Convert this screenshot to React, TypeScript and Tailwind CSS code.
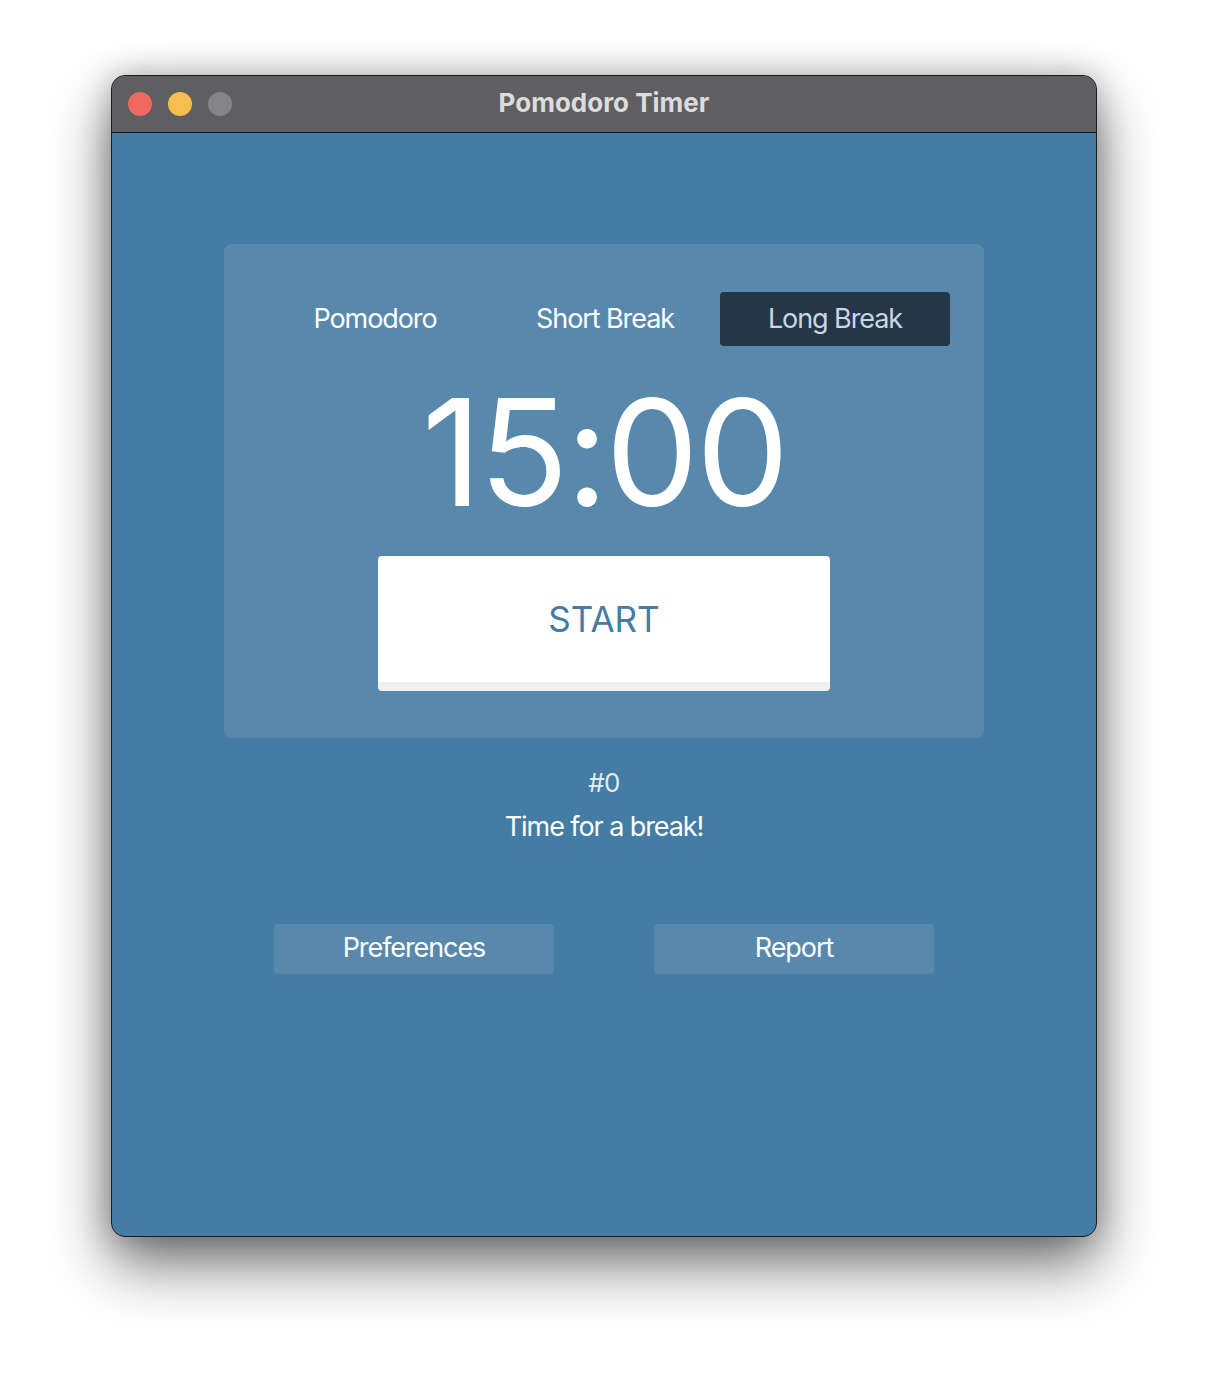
const tabs = ['Pomodoro', 'Short Break', 'Long Break'];

const App: React.FC = () => {
  const active = 'Long Break';

  return (
    <div className="flex min-h-[1384px] w-full items-start justify-center bg-white pt-[75px] font-['Inter',sans-serif]">
      <div className="flex h-[1162px] w-[986px] flex-col overflow-hidden rounded-[14px] border border-[#1c1c1c] bg-[#457ca3] shadow-[0_28px_60px_rgba(0,0,0,0.55),0_0_30px_rgba(0,0,0,0.25)]">
        <header className="relative flex h-[57px] shrink-0 items-center border-b border-[#111] bg-[#5f5f61] px-4">
          <div className="flex items-center gap-4">
            <span className="h-6 w-6 rounded-full bg-[#ee6a5e]" />
            <span className="h-6 w-6 rounded-full bg-[#f5bf4f]" />
            <span className="h-6 w-6 rounded-full bg-[#858587]" />
          </div>
          <h1 className="absolute inset-x-0 -mt-[3px] text-center text-[26px] font-bold text-[#dcdcde]">
            Pomodoro Timer
          </h1>
        </header>

        <main className="flex flex-col items-center">
          <section className="mt-[111px] flex h-[494px] w-[760px] flex-col items-center rounded-lg bg-[#5889ad] pt-12">
            <nav className="flex w-full items-center justify-end pr-[34px]" aria-label="Modus">
              {tabs.map((tab) => (
                <button
                  key={tab}
                  type="button"
                  className={
                    tab === active
                      ? 'h-[54px] w-[230px] rounded bg-[#253646] text-[27px] tracking-[-0.04em] text-[#c9d6e3]'
                      : 'h-[54px] w-[230px] text-[27px] tracking-[-0.04em] text-white'
                  }
                >
                  {tab}
                </button>
              ))}
            </nav>

            <div className="mt-[32px] text-[148px] leading-[150px] tracking-[-0.02em] text-white">15:00</div>

            <button
              type="button"
              className="mt-[28px] flex h-[135px] w-[452px] items-center justify-center rounded border-b-[9px] border-[#efefef] bg-white text-[35px] text-[#457ca3]"
            >
              START
            </button>
          </section>

          <p className="mt-[25px] text-[26px] tracking-[-0.03em] text-[#e3ebf3]">#0</p>
          <p className="mt-[5px] text-[27px] tracking-[-0.04em] text-white">Time for a break!</p>

          <div className="mt-[76px] flex gap-[100px]">
            <button type="button" className="h-[50px] w-[280px] rounded bg-[#5889ad] text-[27px] tracking-[-0.04em] text-white">
              Preferences
            </button>
            <button type="button" className="h-[50px] w-[280px] rounded bg-[#5889ad] text-[27px] tracking-[-0.04em] text-white">
              Report
            </button>
          </div>
        </main>
      </div>
    </div>
  );
};

export default App;
